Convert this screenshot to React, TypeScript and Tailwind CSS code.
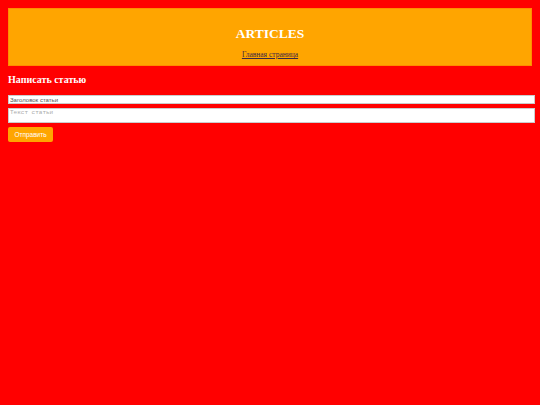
export default function App() {
  return (
    <div className="min-h-[405px] bg-[#ff0000] p-2" style={{ fontFamily: '"Liberation Serif", serif' }}>
      {/* Header */}
      <header className="flex h-[58px] w-[524px] flex-col items-center border border-[#ff8c00] bg-[#ffa500] pt-[16px]">
        <h1 className="text-[13.5px] leading-[18px] font-bold text-white">ARTICLES</h1>
        <a href="#" className="mt-[7px] text-[7.5px] leading-[10px] text-[#3d2846] underline">
          Главная страница
        </a>
      </header>

      {/* Form */}
      <h2 className="mt-[7px] text-[10px] leading-[14px] font-bold text-white">Написать статью</h2>
      <form className="mt-[8px] flex flex-col">
        <input
          type="text"
          defaultValue="Заголовок статьи"
          className="h-[9px] w-[527px] border border-[#ccc] bg-white px-[1px] text-[6px] leading-[7px] text-[#555] outline-none"
          style={{ fontFamily: '"Liberation Sans", sans-serif' }}
        />
        <textarea
          placeholder="Текст статьи"
          className="mt-[4px] h-[15px] w-[527px] resize-none border border-[#ccc] bg-white px-[1px] text-[6px] leading-[7px] outline-none placeholder:text-[#aaa]"
          style={{ fontFamily: '"Liberation Mono", monospace' }}
        />
        <button
          type="button"
          className="mt-[4px] h-[15px] w-[45px] rounded-[2px] bg-[#ffa500] text-[6.5px] text-white"
          style={{ fontFamily: '"Liberation Sans", sans-serif' }}
        >
          Отправить
        </button>
      </form>
    </div>
  );
}
